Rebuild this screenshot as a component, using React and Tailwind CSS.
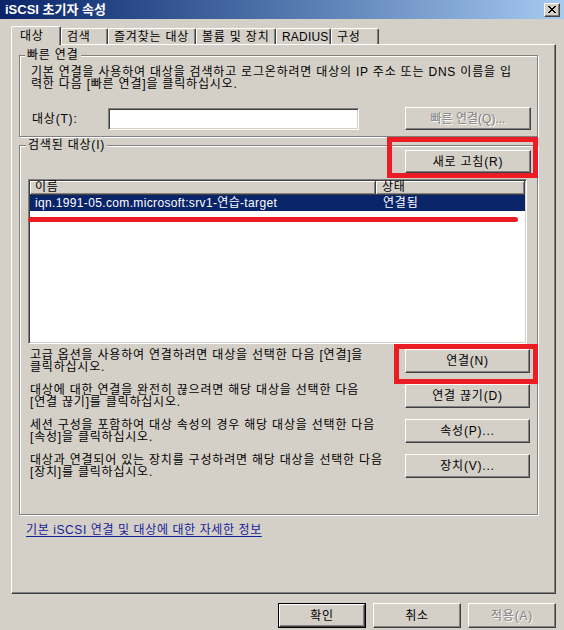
import React from "react";

const raised =
  "border border-t-white border-l-white border-r-[#404040] border-b-[#404040] shadow-[inset_-1px_-1px_0_#808080]";
const etched =
  "border border-[#808080] shadow-[inset_1px_1px_0_#fff,1px_1px_0_#fff]";

function Btn({ children, className = "", disabled }) {
  return (
    <div
      className={`${raised} flex items-center justify-center bg-[#d4d0c8] leading-none ${
        disabled ? "text-[#808080] [text-shadow:1px_1px_0_#fff]" : "text-black"
      } ${className}`}
    >
      {children}
    </div>
  );
}

const tabs = [
  { label: "대상", w: "w-[50px]", active: true },
  { label: "검색", w: "w-[47px]" },
  { label: "즐겨찾는 대상", w: "w-[88px]" },
  { label: "볼륨 및 장치", w: "w-[80px]" },
  { label: "RADIUS", w: "w-[55px] tracking-[0.2px]" },
  { label: "구성", w: "w-[48px]" },
];

const actions = [
  {
    lines: ["고급 옵션을 사용하여 연결하려면 대상을 선택한 다음 [연결]을", "클릭하십시오."],
    label: "연결(N)",
  },
  {
    lines: ["대상에 대한 연결을 완전히 끊으려면 해당 대상을 선택한 다음", "[연결 끊기]를 클릭하십시오."],
    label: "연결 끊기(D)",
  },
  {
    lines: ["세션 구성을 포함하여 대상 속성의 경우 해당 대상을 선택한 다음", "[속성]을 클릭하십시오."],
    label: "속성(P)...",
  },
  {
    lines: ["대상과 연결되어 있는 장치를 구성하려면 해당 대상을 선택한 다음", "[장치]를 클릭하십시오."],
    label: "장치(V)...",
  },
];

export default function App() {
  return (
    <div className="relative w-[564px] h-[630px] overflow-hidden bg-[#d4d0c8] flex flex-col text-[12px] tracking-[0.8px] text-black font-['Liberation_Sans','Noto_Sans_CJK_KR',sans-serif]">
      {/* Title bar */}
      <div className="h-[19px] shrink-0 flex items-center pl-[5px] pr-[4px] tracking-normal bg-linear-to-r from-[#0a246a] to-[#a6caf0]">
        <span className="text-white font-bold text-[13px] leading-none">iSCSI 초기자 속성</span>
        <div className={`${raised} ml-auto w-[16px] h-[14px] bg-[#d4d0c8] flex items-center justify-center`}>
          <svg width="8" height="7" viewBox="0 0 8 7">
            <path d="M0 0 L7 7 M1 0 L8 7 M7 0 L0 7 M8 0 L1 7" stroke="#000" strokeWidth="1" />
          </svg>
        </div>
      </div>

      {/* Tabs */}
      <div className="mt-[7px] ml-[11px] h-[18px] flex items-start">
        {tabs.map((t) => (
          <div
            key={t.label}
            className={`${t.w} border-t border-l border-t-white border-l-white border-r border-r-[#404040] shadow-[inset_-1px_0_0_#808080] rounded-t-[2px] bg-[#d4d0c8] leading-[14px] whitespace-nowrap ${
              t.active ? "relative z-10 h-[19px] pl-[8px] pt-[2px]" : "mt-[2px] h-[16px] pl-[5px] pt-[1px]"
            }`}
          >
            {t.label}
          </div>
        ))}
      </div>

      {/* Tab panel */}
      <div className={`${raised} ml-[11px] w-[545px] h-[550px] pl-[7px] pt-[10px]`}>
        {/* 빠른 연결 */}
        <div className={`${etched} w-[519px] h-[82px]`}>
          <div className="-mt-[8px] ml-[5px] px-[2px] w-fit bg-[#d4d0c8] leading-[14px]">빠른 연결</div>
          <div className="mt-[4px] pl-[11px] leading-[12px] whitespace-nowrap">
            기본 연결을 사용하여 대상을 검색하고 로그온하려면 대상의 IP 주소 또는 DNS 이름을 입
            <br />
            력한 다음 [빠른 연결]을 클릭하십시오.
          </div>
          <div className="mt-[17px] pl-[12px] flex items-center">
            <span className="w-[76px]">대상(T):</span>
            <div className="w-[251px] h-[22px] bg-white border border-t-[#808080] border-l-[#808080] border-r-white border-b-white shadow-[inset_1px_1px_0_#404040,inset_-1px_-1px_0_#d4d0c8]" />
            <Btn disabled className="ml-[46px] w-[126px] h-[23px] tracking-normal">
              빠른 연결(Q)...
            </Btn>
          </div>
        </div>

        {/* 검색된 대상 */}
        <div className={`${etched} mt-[8px] w-[519px] h-[370px]`}>
          <div className="flex items-start pr-[6px]">
            <div className="-mt-[8px] ml-[6px] px-[2px] bg-[#d4d0c8] leading-[14px]">검색된 대상(I)</div>
            <Btn className="ml-auto mt-[4px] w-[126px] h-[23px]">새로 고침(R)</Btn>
          </div>

          <div className="relative mt-[6px] ml-[8px] w-[499px] h-[165px] p-[1px] bg-white border border-t-[#808080] border-l-[#808080] border-r-white border-b-white shadow-[inset_1px_1px_0_#404040,inset_-1px_-1px_0_#d4d0c8]">
            <div className="flex h-[14px] leading-[13px]">
              <div className="w-[346px] pl-[5px] bg-[#d4d0c8] border-r border-b border-r-[#404040] border-b-[#404040] shadow-[inset_1px_1px_0_#fff,inset_-1px_-1px_0_#808080]">
                이름
              </div>
              <div className="flex-1 pl-[6px] bg-[#d4d0c8] border-r border-b border-r-[#404040] border-b-[#404040] shadow-[inset_1px_1px_0_#fff,inset_-1px_-1px_0_#808080]">
                상태
              </div>
            </div>
            <div className="flex h-[16px] items-center bg-[#0a246a] text-white">
              <div className="w-[346px] pl-[5px] whitespace-nowrap tracking-[0.35px]">
                iqn.1991-05.com.microsoft:srv1-연습-target
              </div>
              <div className="pl-[7px]">연결됨</div>
            </div>
            <div className="absolute left-[-1px] top-[37px] w-[490px] h-[5px] rounded-full bg-[#ec1c24]" />
          </div>

          <div className="mt-[5px] pl-[10px] pr-[7px] flex flex-col gap-[11px]">
            {actions.map((a) => (
              <div key={a.label} className="h-[24px] flex items-center">
                <div className="leading-[12px] whitespace-nowrap">
                  {a.lines[0]}
                  <br />
                  {a.lines[1]}
                </div>
                <Btn className="ml-auto w-[125px] h-[24px]">{a.label}</Btn>
              </div>
            ))}
          </div>
        </div>

        <div className="mt-[8px] ml-[7px] leading-[14px] tracking-[0.6px] text-[#14229a] underline underline-offset-2">
          기본 iSCSI 연결 및 대상에 대한 자세한 정보
        </div>
      </div>

      {/* Dialog buttons */}
      <div className="mt-[9px] pr-[8px] flex justify-end gap-[7px]">
        <div className="w-[88px] h-[25px] border border-black flex">
          <Btn className="flex-1">확인</Btn>
        </div>
        <Btn className="w-[88px] h-[25px]">취소</Btn>
        <Btn disabled className="w-[88px] h-[25px]">
          적용(A)
        </Btn>
      </div>

      {/* red annotation boxes */}
      <div className="absolute left-[387px] top-[137px] w-[151px] h-[41px] border-[5px] border-[#ec1c24]" />
      <div className="absolute left-[394px] top-[344px] w-[144px] h-[40px] border-[5px] border-[#ec1c24]" />
    </div>
  );
}
